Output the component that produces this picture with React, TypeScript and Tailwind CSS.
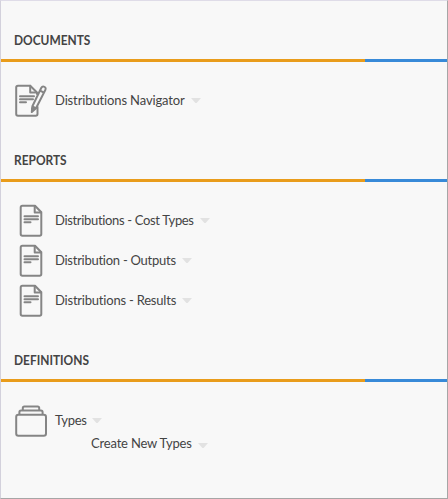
import type { ReactNode } from 'react';

function Caret({ className = '' }: { className?: string }) {
  return (
    <svg className={`h-[5px] w-[10px] shrink-0 ${className}`} viewBox="0 0 10 5">
      <path d="M0 0H10L5.6 5H4.4Z" fill="#e2e2e2" />
    </svg>
  );
}

function PageShape({ edit = false }: { edit?: boolean }) {
  return (
    <svg className="h-[34px] w-[34px] shrink-0" viewBox="0 0 34 34" fill="none" stroke="#858585" strokeWidth="2" strokeLinejoin="round" strokeLinecap="round">
      {edit ? (
        <>
          <path d="M23.5 23V30Q23.5 31.8 21.7 31.8H4Q2.2 31.8 2.2 30V3.5Q2.2 1.7 4 1.7H16.2L23 8.5V10" />
          <path d="M16.2 1.7V8.5H22" />
          <path d="M6 12.3H20M6 15.2H19M6 18.2H12" />
          <path d="M29.8 2.6Q32.5 3.5 31.3 6L22 24.3L17.8 28L18.4 22.2L27.2 4Q28.2 2.1 29.8 2.6ZM26.2 6.7L29.8 8.7M18.4 22.3L22 24.3" fill="#f8f8f8" strokeWidth="2" />
          <path d="M18 24L21 25L17.8 28Z" fill="#858585" strokeWidth="1" />
        </>
      ) : (
        <>
          <path d="M21 1.7H8.4Q6.7 1.7 6.7 3.4V30Q6.7 31.8 8.4 31.8H25.6Q27.3 31.8 27.3 30V8.3Z" />
          <path d="M20.7 2V8.5H27" />
          <path d="M10.5 12.3H24M10.5 15.3H24M10.5 18.3H16.5" />
        </>
      )}
    </svg>
  );
}

function StackShape() {
  return (
    <svg className="h-[34px] w-[34px] shrink-0" viewBox="0 0 34 34" fill="none" stroke="#858585" strokeWidth="2" strokeLinejoin="round">
      <rect x="2.2" y="10.8" width="29.8" height="21" rx="2.2" />
      <path d="M5.4 10.5V8.2Q5.4 6.6 7 6.6H27Q28.6 6.6 28.6 8.2V10.5" />
      <path d="M8.8 6.4V4Q8.8 2.4 10.4 2.4H23.6Q25.2 2.4 25.2 4V6.4" />
    </svg>
  );
}

function Section({ title, children }: { title: string; children: ReactNode }) {
  return (
    <section className="pt-5">
      <h2 className="flex h-[39px] items-center pt-px pl-[13px] text-[13px] font-bold">
        <span className="origin-left scale-x-[0.917]">{title}</span>
      </h2>
      <div className="flex h-[3px]">
        <div className="w-[364px] bg-[#e99c1b]" />
        <div className="flex-1 bg-[#388ad8]" />
      </div>
      <div className="pt-[18px]">{children}</div>
    </section>
  );
}

function Row({ icon, label, width, spacing }: { icon: ReactNode; label: string; width: string; spacing: string }) {
  return (
    <div className="flex h-10 items-center pl-[13px]">
      <div className="mr-[7px] pt-[2px]">{icon}</div>
      <span className={`shrink-0 whitespace-nowrap ${width} ${spacing}`}>{label}</span>
      <Caret />
    </div>
  );
}

export default function App() {
  return (
    <main className="h-[499px] w-[448px] overflow-hidden border border-t-[#dfdce8] border-r-[#a6a6a6] border-b-[#a6a6a6] border-l-[#d3d1dc] bg-[#f8f8f8] font-['Lato','Liberation_Sans',sans-serif] text-[13px] leading-[20px] text-[#444]">
      <div className="-mt-px">
        <Section title="DOCUMENTS">
          <Row icon={<PageShape edit />} label="Distributions Navigator" width="w-[136px]" spacing="tracking-[-0.13px]" />
        </Section>
        <Section title="REPORTS">
          <Row icon={<PageShape />} label="Distributions - Cost Types" width="w-[145px]" spacing="tracking-[-0.33px]" />
          <Row icon={<PageShape />} label="Distribution - Outputs" width="w-[127px]" spacing="tracking-[-0.26px]" />
          <Row icon={<PageShape />} label="Distributions - Results" width="w-[127px]" spacing="tracking-[-0.21px]" />
        </Section>
        <Section title="DEFINITIONS">
          <Row icon={<StackShape />} label="Types" width="w-[37px]" spacing="tracking-[-0.3px]" />
          <div className="-mt-[7px] flex h-5 items-center pl-[90px]">
            <span className="w-[107px] shrink-0 whitespace-nowrap tracking-[-0.18px]">Create New Types</span>
            <Caret className="mt-[5px]" />
          </div>
        </Section>
      </div>
    </main>
  );
}
